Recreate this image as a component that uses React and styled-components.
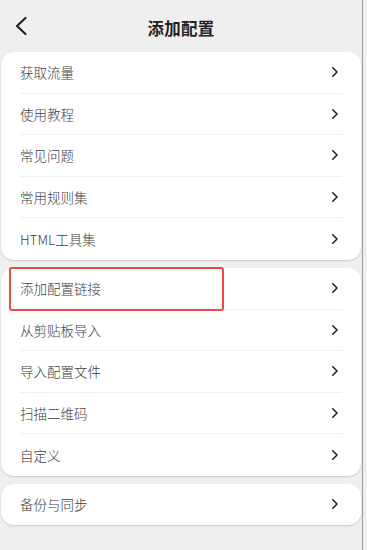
import React from "react";
import styled, { createGlobalStyle } from "styled-components";

const Global = createGlobalStyle`
  html, body { margin: 0; padding: 0; background: #efefef; }
  body { font-family: "Noto Sans CJK SC", "Noto Sans", sans-serif; }
`;

const Page = styled.div`
  width: 363px;
  height: 550px;
  border-right: 1px solid #9a9a9a;
  background: #efefef;
  display: flex;
  flex-direction: column;
  box-sizing: border-box;
`;

const Header = styled.header`
  height: 52px;
  position: relative;
  display: flex;
  align-items: center;
  justify-content: center;
`;

const BackButton = styled.button`
  position: absolute;
  left: 10px;
  top: 15px;
  width: 22px;
  height: 22px;
  padding: 0;
  border: none;
  background: none;
  display: flex;
  align-items: center;
  justify-content: center;
`;

const Title = styled.h1`
  margin: 3px 0 0;
  font-size: 16.5px;
  font-weight: 700;
  color: #222;
  letter-spacing: 0.3px;
`;

const Stack = styled.div`
  display: flex;
  flex-direction: column;
  gap: 8px;
  padding: 0 1px 0 1px;
`;

const Card = styled.section`
  position: relative;
  background: #fff;
  border-radius: 13px;
  box-shadow: 0 1px 2px rgba(0, 0, 0, 0.16);
  padding: 0 19px;
`;

const Row = styled.div`
  height: ${(p) => p.$h || 41.6}px;
  display: flex;
  align-items: center;
  justify-content: space-between;
  border-bottom: 1px solid ${(p) => (p.$last ? "transparent" : "#efefef")};
  box-sizing: border-box;
`;

const Label = styled.span`
  font-size: 13.5px;
  font-weight: 300;
  color: #3d3d3d;
`;

const Highlight = styled.div`
  position: absolute;
  left: 8px;
  top: -1px;
  width: 215px;
  height: 44px;
  border: 2px solid #ea4a45;
  border-radius: 3px;
  box-sizing: border-box;
  pointer-events: none;
`;

const Chevron = () => (
  <svg width="8" height="12" viewBox="0 0 8 12" style={{ marginRight: 3 }}>
    <path d="M1.8 1.8 L6 6 L1.8 10.2" fill="none" stroke="#222" strokeWidth="1.6" strokeLinecap="round" strokeLinejoin="round" />
  </svg>
);

const BackIcon = () => (
  <svg width="14" height="20" viewBox="0 0 14 20">
    <path d="M11.5 2 L3 10 L11.5 18" fill="none" stroke="#222" strokeWidth="2.2" strokeLinecap="round" strokeLinejoin="round" />
  </svg>
);

const groups = [
  ["获取流量", "使用教程", "常见问题", "常用规则集", "HTML工具集"],
  ["添加配置链接", "从剪贴板导入", "导入配置文件", "扫描二维码", "自定义"],
  ["备份与同步"],
];

export default function App() {
  return (
    <>
      <Global />
      <Page>
        <Header>
          <BackButton aria-label="返回">
            <BackIcon />
          </BackButton>
          <Title>添加配置</Title>
        </Header>
        <Stack>
          {groups.map((items, gi) => (
            <Card key={gi}>
              {gi === 1 && <Highlight />}
              {items.map((t, i) => (
                <Row key={t} $last={i === items.length - 1} $h={gi === 2 ? 41 : 41.6}>
                  <Label>{t}</Label>
                  <Chevron />
                </Row>
              ))}
            </Card>
          ))}
        </Stack>
      </Page>
    </>
  );
}
